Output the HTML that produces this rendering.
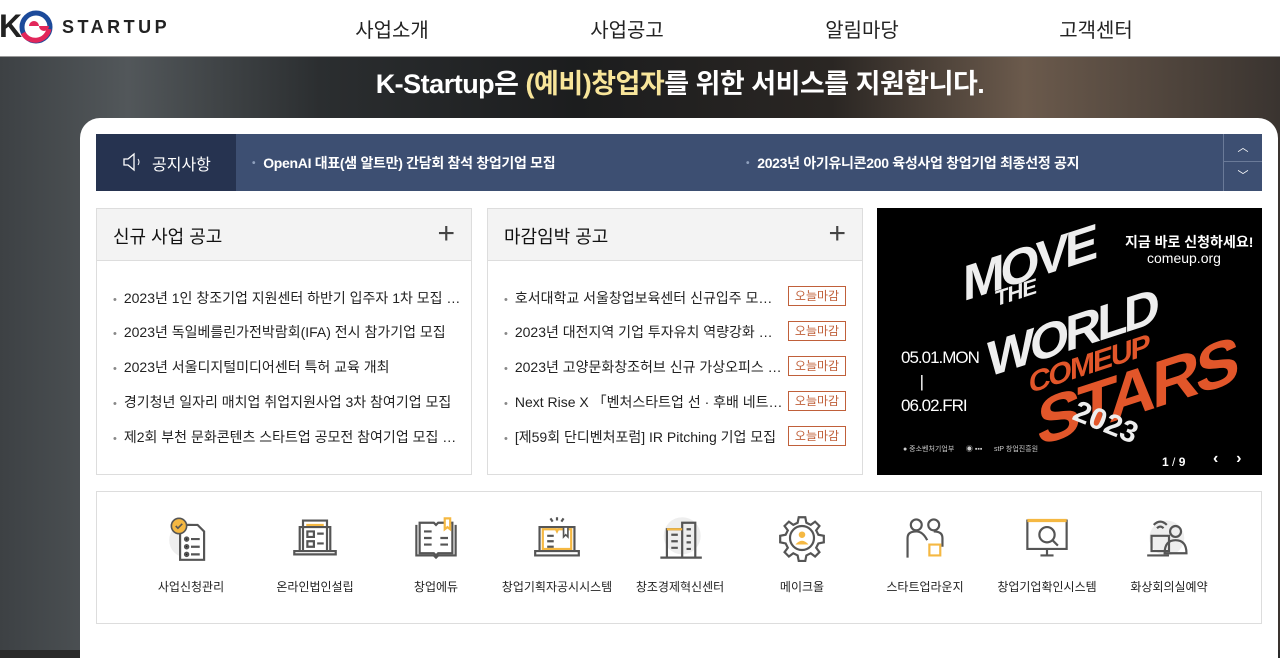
<!DOCTYPE html>
<html><head><meta charset="utf-8"><style>
*{margin:0;padding:0;box-sizing:border-box}
body{width:1280px;height:650px;overflow:hidden;font-family:"Liberation Sans","Noto Sans CJK KR",sans-serif;background:#2a2a2a;position:relative}
.hdr{position:absolute;left:0;top:0;width:1280px;height:57px;background:#fff;border-bottom:1px solid #999}
.nav{position:absolute;top:14px;font-size:20px;color:#222;transform:translateX(-50%)}
.hero{position:absolute;left:0;top:57px;width:1280px;height:593px;background:linear-gradient(90deg,#3d4144 0%,#52575a 10%,#2b2e30 25%,#1c1d1e 45%,#2a2623 65%,#6b5a4c 80%,#3a3430 100%)}
.title{position:absolute;top:62px;left:0;width:1360px;text-align:center;color:#fff;font-size:27px;font-weight:bold;letter-spacing:-0.5px}
.card{position:absolute;left:80px;top:118px;width:1198px;height:540px;background:#fff;border-radius:20px 20px 0 0}
.ntc{position:absolute;left:96px;top:134px;width:1166px;height:57px;background:#3d4f72}
.ntl{position:absolute;left:0;top:0;width:140px;height:57px;background:#263350;color:#fff;font-size:16px;padding:17px 0 0 56px}
.nti{position:absolute;top:19px;color:#fff;font-size:14px;font-weight:bold;letter-spacing:-0.3px}
.nti:before{content:"•";color:#8fa0bd;margin-right:8px;font-size:10px;vertical-align:2px}
.arr{position:absolute;left:1127px;width:39px;height:28px;border-left:1px solid #6a7a98;color:#fff;text-align:center;font-size:11px;line-height:28px}
.pn{position:absolute;top:208px;width:376px;height:267px;border:1px solid #ddd;background:#fff}
.ph{height:52px;background:#f3f3f3;border-bottom:1px solid #ddd;font-size:18px;color:#111;padding:14px 0 0 16px;position:relative}
.ph span{position:absolute;right:16px;top:8px;font-size:30px;font-weight:100;color:#444}
.li{position:absolute;left:16px;font-size:14px;color:#222;white-space:nowrap}
.li:before{content:"•";color:#888;margin-right:7px;font-size:11px}
.bd{position:absolute;right:16px;width:58px;height:20px;border:1px solid #c0603a;color:#c0603a;font-size:12px;text-align:center;line-height:18px}
.bn{position:absolute;left:877px;top:208px;width:385px;height:267px;background:#000;overflow:hidden;color:#fff}
.bot{position:absolute;left:96px;top:491px;width:1166px;height:133px;border:1px solid #ddd}
.ic{position:absolute;top:22px;width:120px;margin-left:-60px;text-align:center;font-size:12px;color:#222}
.ic svg{display:block;margin:0 auto 16px}
</style></head><body>
<div class="hdr">
 <div style="position:absolute;left:-1px;top:8px;font-size:32px;font-weight:bold;color:#222;letter-spacing:-2px">K</div>
 <svg style="position:absolute;left:18px;top:9px" width="36" height="36" viewBox="0 0 36 36"><circle cx="18" cy="18" r="14" fill="none" stroke="#1c4a9a" stroke-width="5"/><path d="M5 24a14 14 0 0 0 26-4" stroke="#e2265a" stroke-width="5" fill="none"/><path d="M11 17a5 5 0 0 1 10 0a5 5 0 0 0 10 0" fill="#e2265a"/></svg>
 <div style="position:absolute;left:62px;top:17px;font-size:18px;font-weight:bold;color:#222;letter-spacing:3.5px">STARTUP</div>
 <div class="nav" style="left:392px">사업소개</div><div class="nav" style="left:627px">사업공고</div><div class="nav" style="left:862px">알림마당</div><div class="nav" style="left:1096px">고객센터</div>
</div>
<div class="hero"></div>
<div class="title">K-Startup은 <span style="color:#f8e59a">(예비)창업자</span>를 위한 서비스를 지원합니다.</div>
<div class="card"></div>
<div class="ntc">
 <div class="ntl"><svg style="position:absolute;left:26px;top:18px" width="24" height="20" viewBox="0 0 24 20"><path d="M2 7h4l6-5v16l-6-5H2z" fill="none" stroke="#fff" stroke-width="1.3"/><path d="M16 7q2 3 0 6" fill="none" stroke="#fff"/></svg>공지사항</div>
 <div class="nti" style="left:156px">OpenAI 대표(샘 알트만) 간담회 참석 창업기업 모집</div>
 <div class="nti" style="left:650px">2023년 아기유니콘200 육성사업 창업기업 최종선정 공지</div>
 <div class="arr" style="top:0;border-bottom:1px solid #6a7a98">︿</div><div class="arr" style="top:28px;height:29px">﹀</div>
</div>
<div class="pn" style="left:96px"><div class="ph">신규 사업 공고<span>+</span></div>
 <div class="li" style="top:79px">2023년 1인 창조기업 지원센터 하반기 입주자 1차 모집 …</div>
 <div class="li" style="top:113px">2023년 독일베를린가전박람회(IFA) 전시 참가기업 모집</div>
 <div class="li" style="top:148px">2023년 서울디지털미디어센터 특허 교육 개최</div>
 <div class="li" style="top:183px">경기청년 일자리 매치업 취업지원사업 3차 참여기업 모집</div>
 <div class="li" style="top:218px">제2회 부천 문화콘텐츠 스타트업 공모전 참여기업 모집 …</div>
</div>
<div class="pn" style="left:487px"><div class="ph">마감임박 공고<span>+</span></div>
 <div class="li" style="top:79px">호서대학교 서울창업보육센터 신규입주 모…</div><div class="bd" style="top:77px">오늘마감</div>
 <div class="li" style="top:113px">2023년 대전지역 기업 투자유치 역량강화 …</div><div class="bd" style="top:112px">오늘마감</div>
 <div class="li" style="top:148px">2023년 고양문화창조허브 신규 가상오피스 …</div><div class="bd" style="top:147px">오늘마감</div>
 <div class="li" style="top:183px">Next Rise X 「벤처스타트업 선 · 후배 네트…</div><div class="bd" style="top:182px">오늘마감</div>
 <div class="li" style="top:218px">[제59회 단디벤처포럼] IR Pitching 기업 모집</div><div class="bd" style="top:217px">오늘마감</div>
</div>
<div class="bn">
 <div style="position:absolute;left:86px;top:30px;font-size:50px;font-weight:bold;color:#eee;transform:skewY(-18deg);letter-spacing:-4px;line-height:50px">MOVE</div>
 <div style="position:absolute;left:118px;top:72px;font-size:22px;font-weight:bold;color:#eee;transform:skewY(-18deg);letter-spacing:-1px">THE</div>
 <div style="position:absolute;left:110px;top:100px;font-size:50px;font-weight:bold;color:#eee;transform:skewY(-18deg);letter-spacing:-4px;line-height:50px">WORLD</div>
 <div style="position:absolute;left:152px;top:140px;font-size:30px;font-weight:bold;color:#e2562a;transform:skewY(-18deg);letter-spacing:-2px">COMEUP</div>
 <div style="position:absolute;left:160px;top:150px;font-size:66px;font-weight:bold;color:#e2562a;transform:skewY(-18deg);letter-spacing:-4px;line-height:66px">STARS</div>
 <div style="position:absolute;left:195px;top:198px;font-size:30px;font-weight:bold;color:#eee;transform:rotate(22deg)">2023</div>
 <div style="position:absolute;left:248px;top:24px;font-size:14px;font-weight:bold">지금 바로 신청하세요!</div>
 <div style="position:absolute;left:270px;top:42px;font-size:14px">comeup.org</div>
 <div style="position:absolute;left:24px;top:138px;font-size:17px;line-height:24px;letter-spacing:-1px">05.01.MON<br>&nbsp;&nbsp;&nbsp;&nbsp;&nbsp;|<br>06.02.FRI</div>
 <div style="position:absolute;left:26px;top:236px;font-size:7px;color:#ccc">● 중소벤처기업부 &nbsp;&nbsp;&nbsp;&nbsp; ◉ ▪▪▪ &nbsp;&nbsp;&nbsp;&nbsp; stP 창업진흥원</div>
 <div style="position:absolute;left:285px;top:247px;font-size:12px;font-weight:bold">1 <span style="font-weight:normal">/</span> 9</div>
 <div style="position:absolute;left:336px;top:242px;font-size:16px;font-weight:bold">‹ &nbsp;&nbsp; ›</div>
</div>
<div class="bot">
 <div class="ic" style="left:94px"><svg width="48" height="48" viewBox="0 0 44 44"><circle cx="18" cy="24" r="16" fill="#eee"/><path d="M12 10h16l6 6v26H12z" fill="#fff" stroke="#555" stroke-width="2"/><circle cx="11" cy="11" r="7" fill="#f5b842" stroke="#555" stroke-width="1.5"/><path d="M8 11l2 2 4-4" stroke="#555" fill="none" stroke-width="1.5"/><g stroke="#555" stroke-width="2"><circle cx="18" cy="23" r="1.5"/><circle cx="18" cy="30" r="1.5"/><circle cx="18" cy="37" r="1.5"/><path d="M22 23h8M22 30h8M22 37h8"/></g></svg>사업신청관리</div>
 <div class="ic" style="left:218px"><svg width="48" height="48" viewBox="0 0 44 44"><g stroke="#555" stroke-width="2" fill="none"><path d="M8 34V12h28v22"/><path d="M11 34V6h22v28"/><path d="M3 34h38v3H3z"/><path d="M15 16h6v5h-6zM15 25h6v5h-6zM24 18h6M24 27h6"/></g><path d="M14 10h16" stroke="#f5b842" stroke-width="2"/></svg>온라인법인설립</div>
 <div class="ic" style="left:339px"><svg width="48" height="48" viewBox="0 0 44 44"><g stroke="#555" stroke-width="2" fill="none"><path d="M4 10v28h16l2 2 2-2h16V10"/><path d="M7 8h13l2 2 2-2h13v28H24l-2 2-2-2H7z"/><path d="M11 16h7M11 22h7M11 28h7M26 22h7M26 28h7"/></g><path d="M30 4h5v10l-2.5-2-2.5 2z" fill="#fff" stroke="#f5b842" stroke-width="2"/></svg>창업에듀</div>
 <div class="ic" style="left:460px"><svg width="48" height="48" viewBox="0 0 44 44"><g stroke="#555" stroke-width="2" fill="none"><path d="M6 34V12h32v22M2 34h40v4H2z"/><path d="M16 4l2 3M22 3v3M28 4l-2 3"/><path d="M13 20h6M13 25h6M13 30h6"/></g><path d="M9 14h12l1 2 1-2h12v18H9z" fill="none" stroke="#f5b842" stroke-width="2"/><path d="M28 12h4v9l-2-2-2 2z" fill="#fff" stroke="#555" stroke-width="1.5"/></svg>창업기획자공시시스템</div>
 <div class="ic" style="left:583px"><svg width="48" height="48" viewBox="0 0 44 44"><circle cx="24" cy="20" r="17" fill="#eee"/><g stroke="#555" stroke-width="2" fill="none"><path d="M10 40V14h14v26M24 40V8h12v32M4 40h38"/><path d="M14 19h6M14 25h6M14 31h6M28 14h4M28 20h4M28 26h4M28 32h4"/></g><path d="M10 14h14" stroke="#f5b842" stroke-width="2"/></svg>창조경제혁신센터</div>
 <div class="ic" style="left:705px"><svg width="48" height="48" viewBox="0 0 44 44"><g stroke="#555" stroke-width="2" fill="none"><path d="M19 3h6l1 5 4 2 4-3 4 4-3 4 2 4 5 1v6l-5 1-2 4 3 4-4 4-4-3-4 2-1 5h-6l-1-5-4-2-4 3-4-4 3-4-2-4-5-1v-6l5-1 2-4-3-4 4-4 4 3 4-2z"/><circle cx="22" cy="22" r="11"/></g><circle cx="22" cy="19" r="3" fill="#f5b842"/><path d="M16 28q6-7 12 0" fill="#f5b842"/></svg>메이크올</div>
 <div class="ic" style="left:828px"><svg width="48" height="48" viewBox="0 0 44 44"><g stroke="#555" stroke-width="2" fill="none"><circle cx="14" cy="10" r="5"/><circle cx="30" cy="10" r="5"/><path d="M6 40V22q0-6 8-6 6 0 10 8M38 30V22q0-6-8-6"/></g><path d="M26 28h10v10H26z" fill="#fff" stroke="#f5b842" stroke-width="2"/></svg>스타트업라운지</div>
 <div class="ic" style="left:950px"><svg width="48" height="48" viewBox="0 0 44 44"><g stroke="#555" stroke-width="2" fill="none"><path d="M4 6h36v26H4zM16 38h12M22 32v6"/><circle cx="22" cy="19" r="7"/><path d="M27 24l5 5"/></g><path d="M4 6h36" stroke="#f5b842" stroke-width="3"/></svg>창업기업확인시스템</div>
 <div class="ic" style="left:1072px"><svg width="48" height="48" viewBox="0 0 44 44"><circle cx="20" cy="22" r="16" fill="#eee"/><g stroke="#555" stroke-width="2" fill="none"><circle cx="28" cy="16" r="5"/><path d="M18 36q0-12 10-12t10 12z"/><path d="M6 20h16v14H6zM2 38h20"/><path d="M8 10q6-6 12 0M11 13q3-3 6 0"/></g></svg>화상회의실예약</div>
</div>
</body></html>
